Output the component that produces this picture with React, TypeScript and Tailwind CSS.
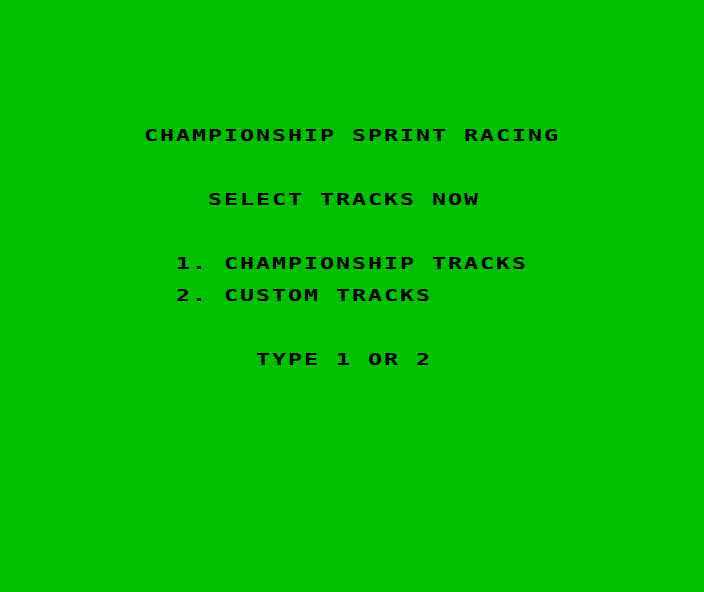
import React from 'react';

const Line: React.FC<{ className?: string; children: React.ReactNode }> = ({ className = '', children }) => (
  <div className={'h-4 ' + className}>
    <span className="inline-block origin-left scale-x-[1.55] tracking-[1.29px] whitespace-pre">{children}</span>
  </div>
);

const App: React.FC = () => {
  return (
    <div className="w-full h-[592px] bg-[#00c000] pt-[128px] font-['DejaVu_Sans_Mono',monospace] font-bold text-[15px] leading-4 text-black overflow-hidden">
      <Line className="pl-[144px]">CHAMPIONSHIP SPRINT RACING</Line>
      <Line className="pl-[208px] mt-12">SELECT TRACKS NOW</Line>
      <Line className="pl-[176px] mt-12">1. CHAMPIONSHIP TRACKS</Line>
      <Line className="pl-[176px] mt-4">2. CUSTOM TRACKS</Line>
      <Line className="pl-[256px] mt-12">TYPE 1 OR 2</Line>
    </div>
  );
};

export default App;
